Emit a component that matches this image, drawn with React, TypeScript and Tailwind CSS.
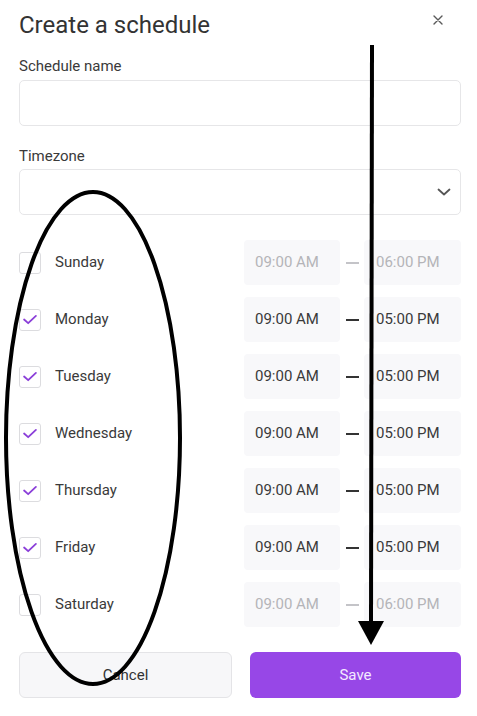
import React from 'react'

const days = [
  { name: 'Sunday', on: false, from: '09:00 AM', to: '06:00 PM' },
  { name: 'Monday', on: true, from: '09:00 AM', to: '05:00 PM' },
  { name: 'Tuesday', on: true, from: '09:00 AM', to: '05:00 PM' },
  { name: 'Wednesday', on: true, from: '09:00 AM', to: '05:00 PM' },
  { name: 'Thursday', on: true, from: '09:00 AM', to: '05:00 PM' },
  { name: 'Friday', on: true, from: '09:00 AM', to: '05:00 PM' },
  { name: 'Saturday', on: false, from: '09:00 AM', to: '06:00 PM' },
]

function DayRow({ name, on, from, to }: { name: string; on: boolean; from: string; to: string }) {
  const timeColor = on ? 'text-[#3a3a3a]' : 'text-[#b4b4b8]'
  return (
    <div className="flex items-center h-[45px]">
      <div className="flex items-center flex-1 gap-[14px]">
        <div className="w-[22px] h-[22px] rounded-[3px] border border-[#dcdcdf] bg-white flex items-center justify-center">
          {on && (
            <svg width="22" height="22" viewBox="0 0 22 22" fill="none">
              <polyline points="4.5,10.5 9,14.5 17.5,6.5" stroke="#8b3fd9" strokeWidth="2" strokeLinecap="round" strokeLinejoin="round" />
            </svg>
          )}
        </div>
        <span className="text-[15px] text-[#3a3a3a]">{name}</span>
      </div>
      <div className={`w-[96px] h-full rounded-[4px] bg-[#f8f8fa] flex items-center pl-[11px] text-[15px] ${timeColor}`}>
        {from}
      </div>
      <div className="w-[24px] flex justify-center">
        <div className={`w-[13px] h-[2px] ${on ? 'bg-[#333]' : 'bg-[#c4c4c8]'}`} />
      </div>
      <div className={`w-[97px] h-full rounded-[4px] bg-[#f8f8fa] flex items-center pl-[12px] text-[15px] ${timeColor}`}>
        {to}
      </div>
    </div>
  )
}

export default function App() {
  return (
    <div className="relative w-[477px] h-[716px] bg-white pl-[19px] pr-[16px] overflow-hidden" style={{ fontFamily: 'Roboto, "Noto Sans", sans-serif' }}>
      <div className="flex items-start justify-between pt-[11px]">
        <h1 className="text-[24px] leading-[28px] text-[#333]">Create a schedule</h1>
        <button className="mt-[4px] mr-[18px] w-[10px] h-[10px]">
          <svg width="10" height="10" viewBox="0 0 10 10">
            <path d="M1 1 L9 9 M9 1 L1 9" stroke="#5a5a5a" strokeWidth="1.4" strokeLinecap="round" />
          </svg>
        </button>
      </div>

      <label className="block mt-[17px] text-[15px] leading-[20px] text-[#3a3a3a]">Schedule name</label>
      <div className="mt-[4px] h-[46px] rounded-[5px] border border-[#e6e6e8] bg-white" />

      <label className="block mt-[20px] text-[15px] leading-[20px] text-[#3a3a3a]">Timezone</label>
      <div className="mt-[3px] h-[46px] rounded-[5px] border border-[#e6e6e8] bg-white flex items-center justify-end pr-[9px]">
        <svg width="14" height="8" viewBox="0 0 14 8" fill="none">
          <polyline points="1.5,1.5 7,6.5 12.5,1.5" stroke="#555" strokeWidth="1.8" strokeLinecap="round" strokeLinejoin="round" />
        </svg>
      </div>

      <div className="mt-[25px] flex flex-col gap-[12px]">
        {days.map((d) => (
          <DayRow key={d.name} {...d} />
        ))}
      </div>

      <div className="mt-[25px] flex gap-[18px]">
        <button className="flex-1 h-[46px] rounded-[6px] border border-[#e4e4e7] bg-[#f7f7f9] text-[15px] text-[#333]">Cancel</button>
        <button className="flex-1 h-[46px] rounded-[6px] bg-[#9747e7] text-[15px] text-[#f3eaff]">Save</button>
      </div>

      <svg className="absolute left-0 top-0 pointer-events-none" width="477" height="716" viewBox="0 0 477 716" fill="none">
        <ellipse cx="93" cy="438" rx="87" ry="246" stroke="#000" strokeWidth="4" />
        <line x1="372" y1="45" x2="371" y2="624" stroke="#000" strokeWidth="4" />
        <polygon points="358,621 384,621 371,645" fill="#000" />
      </svg>
    </div>
  )
}
